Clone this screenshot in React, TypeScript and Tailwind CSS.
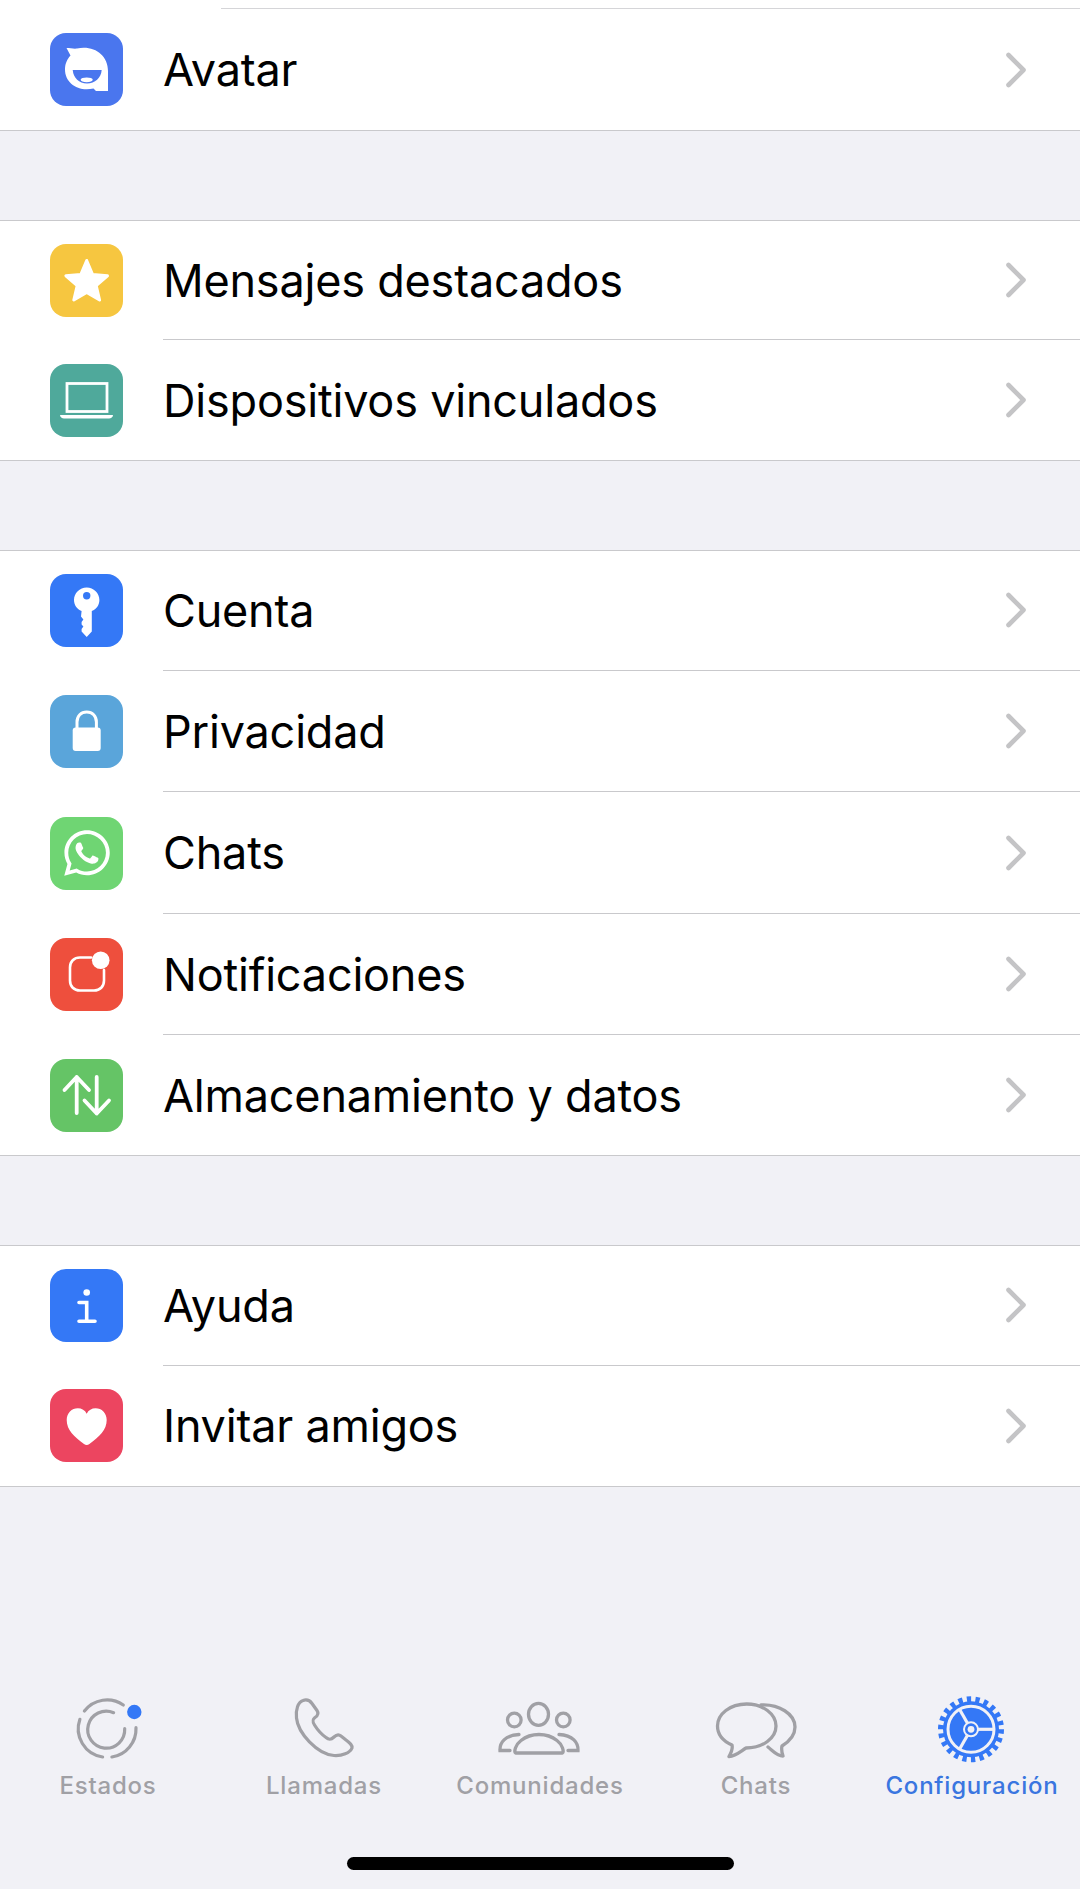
import React from 'react';
import { FaWhatsapp } from 'react-icons/fa';

const AvatarIcon = () => (
  <svg viewBox="0 0 73 73" className="w-full h-full">
    <path d="M16.5 15 C20 15 24 16 27 15.5 C44 12 58 22 58 38 V58 H46 L43.5 55.5 C28 59 15 50 15 36.5 C15 30 17.5 26 20.5 22.5 Z" fill="#fff" />
    <path d="M22.7 37 H51.7 C51 45 45 50.5 37 50.5 C29 50.5 23.5 45 22.7 37 Z" fill="#4a76ee" />
    <ellipse cx="36.7" cy="46.8" rx="6" ry="2.4" fill="#fff" />
  </svg>
);

const StarIcon = () => (
  <svg viewBox="0 0 73 73" className="w-full h-full">
    <path d="M36.7 16.5 L42.6 30.5 L57.5 31.8 L46.2 41.6 L49.6 56 L36.7 48.4 L23.8 56 L27.2 41.6 L15.9 31.8 L30.8 30.5 Z" fill="#fff" stroke="#fff" strokeWidth="3" strokeLinejoin="round" />
  </svg>
);

const LaptopIcon = () => (
  <svg viewBox="0 0 73 73" className="w-full h-full">
    <rect x="17" y="19.5" width="40" height="28" fill="none" stroke="#fff" strokeWidth="2.8" />
    <path d="M10 51 H63 C63 53 61 54.5 59 54.5 H14 C12 54.5 10 53 10 51 Z" fill="#fff" />
  </svg>
);

const KeyIcon = () => (
  <svg viewBox="0 0 73 73" className="w-full h-full">
    <path d="M36.7 13.5 C43.7 13.5 49.4 19.2 49.4 26 C49.4 31 46.5 35 41.8 37 V57.5 L36.7 63 L31.6 57.5 V55 L33.4 52.5 L31.6 50.5 V48 L33.4 45.5 L31 42.5 L31.6 37 C27 35 24 31 24 26 C24 19.2 29.7 13.5 36.7 13.5 Z" fill="#fff" />
    <circle cx="36.7" cy="21.7" r="3.7" fill="#3478f6" />
  </svg>
);

const LockIcon = () => (
  <svg viewBox="0 0 73 73" className="w-full h-full">
    <path d="M27 33 V27 C27 21 31 17 36.7 17 C42.4 17 46.4 21 46.4 27 V33" fill="none" stroke="#fff" strokeWidth="3" />
    <rect x="22.7" y="32.5" width="28" height="23.5" rx="3" fill="#fff" />
  </svg>
);

const NotifIcon = () => (
  <svg viewBox="0 0 73 73" className="w-full h-full">
    <path d="M41 19.5 H30 C24 19.5 20 23.5 20 29.5 V42.5 C20 48.5 24 52.5 30 52.5 H44 C50 52.5 54 48.5 54 42.5 V32" fill="none" stroke="#fff" strokeWidth="2.6" strokeLinecap="round" />
    <circle cx="50.7" cy="22.3" r="8.8" fill="#fff" />
  </svg>
);

const ArrowsIcon = () => (
  <svg viewBox="0 0 73 73" className="w-full h-full" fill="none" stroke="#fff" strokeWidth="3.8" strokeLinecap="round" strokeLinejoin="round">
    <path d="M26.7 54 V18 M14.5 31 L26.7 18 L39 31" />
    <path d="M46.7 18 V54.5 M34.5 41.5 L46.7 54.5 L59 41.5" />
  </svg>
);

const InfoIcon = () => (
  <svg viewBox="0 0 73 73" className="w-full h-full" fill="none" stroke="#fff" strokeWidth="3.6" strokeLinecap="round">
    <circle cx="36.7" cy="23.5" r="3.3" fill="#fff" stroke="none" />
    <path d="M29 33.5 H36.7 V52.3 M29 52.3 H45" />
  </svg>
);

const HeartIcon = () => (
  <svg viewBox="0 0 73 73" className="w-full h-full">
    <path d="M36.7 56 C35.8 56 34.8 55.6 34 55 C24 47.5 16.7 41 16.7 31 C16.7 24 21.8 19.3 27.8 19.3 C31.7 19.3 35 21.3 36.7 24.7 C38.4 21.3 41.7 19.3 45.6 19.3 C51.6 19.3 56.7 24 56.7 31 C56.7 41 49.4 47.5 39.4 55 C38.6 55.6 37.6 56 36.7 56 Z" fill="#fff" />
  </svg>
);

const WhatsappIcon = () => (
  <div className="w-full h-full flex items-center justify-center text-white">
    <FaWhatsapp size={52} />
  </div>
);

const groups = [
  [
    { label: 'Mensajes destacados', color: 'bg-[#f6c640]', Icon: StarIcon },
    { label: 'Dispositivos vinculados', color: 'bg-[#4fa99b]', Icon: LaptopIcon },
  ],
  [
    { label: 'Cuenta', color: 'bg-[#3478f6]', Icon: KeyIcon },
    { label: 'Privacidad', color: 'bg-[#5aa5da]', Icon: LockIcon },
    { label: 'Chats', color: 'bg-[#6fd573]', Icon: WhatsappIcon },
    { label: 'Notificaciones', color: 'bg-[#ee4f3d]', Icon: NotifIcon },
    { label: 'Almacenamiento y datos', color: 'bg-[#65c466]', Icon: ArrowsIcon },
  ],
  [
    { label: 'Ayuda', color: 'bg-[#3478f6]', Icon: InfoIcon },
    { label: 'Invitar amigos', color: 'bg-[#ec4560]', Icon: HeartIcon },
  ],
];

function Row({ label, color, Icon, first, last }: { label: string; color: string; Icon: React.ComponentType; first: boolean; last: boolean }) {
  return (
    <div className={`flex bg-white pl-[50px] ${first ? 'h-[119.7px]' : last ? 'h-[120px]' : 'h-[121.5px]'}`}>
      <div className="flex items-center">
        <div className={`w-[73px] h-[73px] rounded-[16px] overflow-hidden ${color}`}>
          <Icon />
        </div>
      </div>
      <div className={`ml-[40px] flex-1 flex items-center justify-between pr-[53px] ${last ? '' : 'border-b border-[#c9c9cc]'}`}>
        <span className="text-[45px] leading-none text-black tracking-[-0.2px]">{label}</span>
        <svg viewBox="0 0 22 36" className="w-[22px] h-[36px]" fill="none" stroke="#c4c4c6" strokeWidth="4.6" strokeLinecap="round" strokeLinejoin="round">
          <path d="M3.5 3 L18.5 18 L3.5 33" />
        </svg>
      </div>
    </div>
  );
}

const TAB_GRAY = '#a0a0a5';

const tabs = [
  {
    label: 'Estados',
    icon: (
      <g fill="none" stroke={TAB_GRAY} strokeWidth="3.2" strokeLinecap="round" transform="translate(10 -3)">
        <path d="M16.4 23 A28.5 28.5 0 0 1 55.3 17" />
        <path d="M11.9 31.3 A28.5 28.5 0 0 0 34.6 69" />
        <path d="M43.9 69 A28.5 28.5 0 0 0 68 39.7" />
        <path d="M45.6 24.7 A18.5 18.5 0 1 0 56.7 40.7" />
        <circle cx="66.3" cy="24" r="7.2" fill="#3478f6" stroke="none" />
      </g>
    ),
  },
  {
    label: 'Llamadas',
    icon: (
      <path
        transform="translate(10 -3)"
        d="M19 12.5 C14 14 11.5 22 12.5 30 C14 45 33 66 50 67.5 C58 68 66 65 68 60 C68.5 57 66 55 62 52 L57 48 C54 45.5 52 47 50 49 C47 52 45 52 42 49.5 C37 46 33 41 30.5 37 C28 33 28.5 31.5 31 29.5 C34 27.5 35 25.5 33 22.5 L28 15.5 C25.5 12 22 11.5 19 12.5 Z"
        fill="none"
        stroke={TAB_GRAY}
        strokeWidth="3.2"
        strokeLinejoin="round"
      />
    ),
  },
  {
    label: 'Comunidades',
    icon: (
      <g fill="none" stroke={TAB_GRAY} strokeWidth="3.3" strokeLinecap="round">
        <ellipse cx="48.5" cy="23.3" rx="10" ry="11" />
        <circle cx="24.3" cy="29" r="6.8" />
        <circle cx="73.3" cy="29" r="6.8" />
        <path d="M25.5 62 C24 61 25 54 31 49.5 C36 45.5 42 43.5 49 43.5 C56 43.5 62 45.5 67 49.5 C73 54 74 61 72.5 62 Z" strokeLinejoin="round" />
        <path d="M20 59.5 H10 C9.5 52 15 44 29 43.5" />
        <path d="M78 59.5 H88 C88.5 52 83 44 69 43.5" />
      </g>
    ),
  },
  {
    label: 'Chats',
    icon: (
      <g fill="none" stroke={TAB_GRAY} strokeWidth="3.3" strokeLinejoin="round" strokeLinecap="round" transform="translate(-1 0)">
        <path d="M41.7 13 C25 13 12.5 23 12.5 35 C12.5 44 18 50 27 54 C28 58 26 62 24 65.5 C31 65 36 60 41 57 C58 57 71 47 71 35 C71 23 58 13 41.7 13 Z" />
        <path d="M56 14 C74 13 90 23 90 36 C90 43 85 50 77 55 C76 59 77 62 78 65 C72 65 68 60 63 56" />
      </g>
    ),
  },
  {
    label: 'Configuración',
    active: true,
    icon: (
      <g transform="translate(49 38.3)">
        <circle r="29.5" fill="none" stroke="#3478f6" strokeWidth="7" strokeDasharray="4.2 4.22" />
        <circle r="28" fill="#3478f6" />
        <circle r="23" fill="none" stroke="#f1f1f6" strokeWidth="3" />
        <g stroke="#f1f1f6" strokeWidth="3.2">
          <path d="M7 0 H23" />
          <path d="M-3.5 -6 L-11.5 -20" />
          <path d="M-3.5 6 L-11.5 20" />
        </g>
        <circle r="7" fill="none" stroke="#f1f1f6" strokeWidth="2" />
        <circle r="3.4" fill="#f1f1f6" />
      </g>
    ),
  },
];

export default function App() {
  return (
    <div className="w-[1080px] h-[1889px] bg-[#f1f1f6] flex flex-col overflow-hidden font-['Inter',sans-serif]">
      <div className="bg-white h-[9px] pl-[221px]">
        <div className="h-full border-b border-[#d5d5d8]" />
      </div>

      <div className="bg-white border-b border-[#c9c9cc] flex h-[122px] pl-[50px]">
        <div className="flex items-center">
          <div className="w-[73px] h-[73px] rounded-[16px] overflow-hidden bg-[#4a76ee]">
            <AvatarIcon />
          </div>
        </div>
        <div className="ml-[40px] flex-1 flex items-center justify-between pr-[53px]">
          <span className="text-[45px] leading-none text-black tracking-[-0.2px]">Avatar</span>
          <svg viewBox="0 0 22 36" className="w-[22px] h-[36px]" fill="none" stroke="#c4c4c6" strokeWidth="4.6" strokeLinecap="round" strokeLinejoin="round">
            <path d="M3.5 3 L18.5 18 L3.5 33" />
          </svg>
        </div>
      </div>

      {groups.map((rows) => (
        <div key={rows[0].label} className="mt-[88.7px] bg-white border-y border-[#c9c9cc]">
          {rows.map((row, i) => (
            <Row key={row.label} {...row} first={i === 0} last={i === rows.length - 1} />
          ))}
        </div>
      ))}

      <div className="mt-auto">
        <div className="grid grid-cols-5">
          {tabs.map((tab) => (
            <div key={tab.label} className="flex flex-col items-center">
              <svg viewBox="0 0 100 75" className="w-[100px] h-[75px]">
                {tab.icon}
              </svg>
              <span className={`mt-[6px] text-[24px] leading-[28px] font-medium whitespace-nowrap tracking-[0.8px] ${tab.active ? 'text-[#3a76e0]' : 'text-[#a0a0a5]'}`}>
                {tab.label}
              </span>
            </div>
          ))}
        </div>
        <div className="mt-[57px] mb-[19px] mx-auto w-[387px] h-[13px] rounded-full bg-black" />
      </div>
    </div>
  );
}
